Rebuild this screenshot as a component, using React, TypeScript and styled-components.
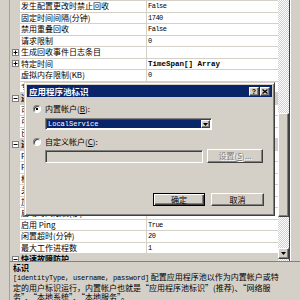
import React from 'react';
import styled, { createGlobalStyle, css } from 'styled-components';

const CJK = '"Noto Sans CJK SC", "Noto Sans", sans-serif';
const MONO = '"Liberation Mono", "Noto Sans CJK SC", monospace';
const FACE = '#d4d0c8';
const LINE = '#d4d0c8';

interface RowData {
  name: string;
  value?: string;
  category?: boolean;
  expand?: boolean;
  bold?: boolean;
}

const rows: RowData[] = [
  { name: '发生配置更改时禁止回收', value: 'False' },
  { name: '固定时间间隔(分钟)', value: '1740' },
  { name: '禁用重叠回收', value: 'False' },
  { name: '请求限制', value: '0' },
  { name: '生成回收事件日志条目', value: '', expand: true },
  { name: '特定时间', value: 'TimeSpan[] Array', expand: true, bold: true },
  { name: '虚拟内存限制(KB)', value: '0' },
  { name: '专用内存限制(KB)', value: '0' },
  { name: '进程孤立', category: true },
  { name: '可执行文件', value: '' },
  { name: '可执行文件参数', value: '' },
  { name: '已启用', value: 'False' },
  { name: '进程模型', category: true },
  { name: 'Ping 间隔(秒)', value: '30' },
  { name: 'Ping 最大响应时间(秒)', value: '90' },
  { name: '标识', value: 'LocalService' },
  { name: '关闭时间限制(秒)', value: '90' },
  { name: '加载用户配置文件', value: 'False' },
  { name: '启动时间限制(秒)', value: '90' },
  { name: '启用 Ping', value: 'True' },
  { name: '闲置超时(分钟)', value: '20' },
  { name: '最大工作进程数', value: '1' },
  { name: '快速故障防护', category: true },
  { name: '已启用', value: 'False' },
];

const Expander = ({ open }: { open?: boolean }) => (
  <svg width="7" height="7" viewBox="0 0 7 7">
    <rect x="0.5" y="0.5" width="6" height="6" fill="#fff" stroke="#808080" />
    <path d="M1.5 3.5h4" stroke="#000" />
    {!open && <path d="M3.5 1.5v4" stroke="#000" />}
  </svg>
);

const App = () => (
  <>
    <GlobalStyle />
    <Screen>
      <Top>
        <Side />
        <Grid>
          {rows.map((row, i) => (
            <Row key={i}>
              <Margin>
                {row.category && <Expander open />}
                {row.expand && <Expander />}
              </Margin>
              <Name $category={row.category}>{row.name}</Name>
              <Divider $category={row.category} />
              <Value $category={row.category} $bold={row.bold}>
                {row.value}
              </Value>
            </Row>
          ))}
        </Grid>
        <ScrollBar>
          <Thumb />
          <Spacer />
          <ArrowButton>
            <svg width="5" height="3" viewBox="0 0 5 3">
              <path d="M0 0h5L2.5 3z" fill="#000" />
            </svg>
          </ArrowButton>
        </ScrollBar>
        <RightEdge />
      </Top>
      <Desc>
        <DescTitle>标识</DescTitle>
        <DescLine>
          <Mono>[identityType, username, password]</Mono> 配置应用程序池以作为内置帐户或特
        </DescLine>
        <DescLine>定的用户标识运行，内置帐户也就是“应用程序池标识”(推荐)、“网络服</DescLine>
        <DescLine>务”、“本地系统”、“本地服务”。</DescLine>
      </Desc>

      <Dialog>
        <TitleBar>
          <TitleText>应用程序池标识</TitleText>
          <TitleButton>?</TitleButton>
          <TitleButton>
            <svg width="6" height="5" viewBox="0 0 6 5">
              <path d="M0.5 0.5l5 4M5.5 0.5l-5 4" stroke="#000" strokeWidth="1.3" />
            </svg>
          </TitleButton>
        </TitleBar>
        <Body>
          <RadioRow>
            <Radio $checked />
            <span>
              内置帐户(<u>B</u>):
            </span>
          </RadioRow>
          <Select>
            <Selected>LocalService</Selected>
            <DropButton>
              <svg width="5" height="3" viewBox="0 0 5 3">
                <path d="M0 0h5L2.5 3z" fill="#000" />
              </svg>
            </DropButton>
          </Select>
          <RadioRow $gap>
            <Radio />
            <span>
              自定义帐户(<u>C</u>):
            </span>
          </RadioRow>
          <FieldRow>
            <TextBox />
            <PushButton $disabled $width={56}>
              设置(<u>S</u>)...
            </PushButton>
          </FieldRow>
          <Footer>
            <PushButton $default $width={52}>
              确定
            </PushButton>
            <PushButton $width={53}>取消</PushButton>
          </Footer>
        </Body>
      </Dialog>
    </Screen>
  </>
);

const GlobalStyle = createGlobalStyle`
  html, body {
    margin: 0;
    padding: 0;
    background: ${FACE};
  }
  body {
    font-family: ${CJK};
    font-size: 8px;
    color: #000;
    overflow: hidden;
  }
`;

const raised = css`
  box-sizing: border-box;
  background: ${FACE};
  border: 1px solid;
  border-color: #fff #404040 #404040 #fff;
  box-shadow: inset -1px -1px #808080;
`;

const sunken = css`
  box-sizing: border-box;
  border: 1px solid;
  border-color: #808080 #fff #fff #808080;
  box-shadow: inset 1px 1px #404040;
`;

const Screen = styled.div`
  position: relative;
  width: 300px;
  height: 300px;
  display: flex;
  flex-direction: column;
  overflow: hidden;
`;

const Top = styled.div`
  display: flex;
  height: 261px;
  flex: none;
`;

const Side = styled.div`
  width: 9px;
  flex: none;
  border-right: 1px solid #a0a0a0;
`;

const Grid = styled.div`
  width: 268px;
  flex: none;
  display: flex;
  flex-direction: column;
  gap: 1px;
  padding-top: 1px;
  background: ${LINE};
  overflow: hidden;
`;

const Row = styled.div`
  display: grid;
  grid-template-columns: 10px 126px 1px 131px;
  height: 10.5px;
  flex: none;
`;

const Margin = styled.div`
  display: flex;
  align-items: center;
  padding-left: 2px;
  background: ${LINE};
`;

const Name = styled.div<{ $category?: boolean }>`
  background: ${(p) => (p.$category ? LINE : '#fff')};
  font-weight: ${(p) => (p.$category ? 700 : 400)};
  padding-left: 1px;
  line-height: 10.5px;
  white-space: nowrap;
  overflow: hidden;
`;

const Divider = styled.div<{ $category?: boolean }>`
  background: ${LINE};
`;

const Value = styled.div<{ $category?: boolean; $bold?: boolean }>`
  background: ${(p) => (p.$category ? LINE : '#fff')};
  font-family: ${MONO};
  font-size: ${(p) => (p.$bold ? '7.5px' : '7px')};
  font-weight: ${(p) => (p.$bold ? 700 : 400)};
  letter-spacing: ${(p) => (p.$bold ? '0' : '-0.5px')};
  padding-left: 1px;
  line-height: 10.5px;
  white-space: nowrap;
  overflow: hidden;
`;

const ScrollBar = styled.div`
  width: 11px;
  flex: none;
  display: flex;
  flex-direction: column;
  padding-bottom: 2px;
  box-sizing: border-box;
  background-color: #f4f3ee;
  background-image: repeating-conic-gradient(${FACE} 0 25%, #fff 0 50%);
  background-size: 2px 2px;
`;

const Thumb = styled.div`
  ${raised};
  margin-top: 113px;
  height: 104px;
  flex: none;
`;

const Spacer = styled.div`
  flex: 1;
`;

const ArrowButton = styled.div`
  ${raised};
  height: 11px;
  flex: none;
  display: flex;
  align-items: center;
  justify-content: center;
`;

const RightEdge = styled.div`
  flex: 1;
  border-left: 1px solid #404040;
  box-shadow: inset 1px 0 #fff;
`;

const Desc = styled.div`
  flex: 1;
  margin-left: 9px;
  border-left: 1px solid #a0a0a0;
  border-top: 1px solid #808080;
  padding: 1px 0 0 3px;
  line-height: 9px;
  font-size: 8px;
`;

const DescTitle = styled.div`
  font-weight: 700;
`;

const DescLine = styled.div`
  white-space: nowrap;
`;

const Mono = styled.span`
  font-family: ${MONO};
  font-size: 7px;
  letter-spacing: -0.2px;
`;

const Dialog = styled.div`
  position: absolute;
  left: 24px;
  top: 82px;
  width: 251px;
  height: 134px;
  box-sizing: border-box;
  background: ${FACE};
  border: 1px solid;
  border-color: ${FACE} #404040 #404040 ${FACE};
  box-shadow: inset 1px 1px #fff, inset -1px -1px #808080;
  padding: 2px;
  display: flex;
  flex-direction: column;
`;

const TitleBar = styled.div`
  height: 12px;
  flex: none;
  display: flex;
  align-items: center;
  gap: 1px;
  padding: 0 2px 0 2px;
  background: #0a246a;
  color: #fff;
`;

const TitleText = styled.div`
  flex: 1;
  font-size: 8.5px;
  font-weight: 700;
  line-height: 12px;
`;

const TitleButton = styled.div`
  ${raised};
  width: 10px;
  height: 9px;
  display: flex;
  align-items: center;
  justify-content: center;
  color: #000;
  font-family: "Liberation Sans", sans-serif;
  font-weight: 700;
  font-size: 7px;
  line-height: 7px;
`;

const Body = styled.div`
  flex: 1;
  display: flex;
  flex-direction: column;
  padding: 8px 8px 7px 6px;
`;

const RadioRow = styled.div<{ $gap?: boolean }>`
  display: flex;
  align-items: center;
  gap: 4px;
  height: 8px;
  line-height: 8px;
  margin-top: ${(p) => (p.$gap ? '8px' : '0')};
`;

const Radio = styled.span<{ $checked?: boolean }>`
  ${sunken};
  width: 8px;
  height: 8px;
  border-radius: 50%;
  background: #fff;
  display: flex;
  align-items: center;
  justify-content: center;

  &::after {
    content: '';
    width: 2px;
    height: 2px;
    background: ${(p) => (p.$checked ? '#000' : 'transparent')};
  }
`;

const Select = styled.div`
  ${sunken};
  margin: 5px 0 0 12px;
  width: 167px;
  height: 12px;
  padding: 1px;
  background: #fff;
  display: flex;
`;

const Selected = styled.div`
  flex: 1;
  background: #0a246a;
  color: #fff;
  font-family: ${MONO};
  font-size: 7px;
  line-height: 8px;
  padding-left: 1px;
`;

const DropButton = styled.div`
  ${raised};
  width: 9px;
  display: flex;
  align-items: center;
  justify-content: center;
`;

const FieldRow = styled.div`
  display: flex;
  align-items: flex-start;
  gap: 4px;
  margin: 4px 0 0 12px;
`;

const TextBox = styled.div`
  ${sunken};
  width: 158px;
  height: 13px;
  background: ${FACE};
`;

const PushButton = styled.div<{ $width: number; $disabled?: boolean; $default?: boolean }>`
  ${raised};
  width: ${(p) => p.$width}px;
  height: ${(p) => (p.$disabled ? 14 : 13)}px;
  margin-top: ${(p) => (p.$disabled ? '-1px' : '0')};
  display: flex;
  align-items: center;
  justify-content: center;
  line-height: 8px;
  color: ${(p) => (p.$disabled ? '#808080' : '#000')};
  text-shadow: ${(p) => (p.$disabled ? '1px 1px #fff' : 'none')};
  ${(p) =>
    p.$default &&
    css`
      border: 1px solid #000;
      box-shadow: inset 1px 1px #fff, inset -1px -1px #404040, inset -2px -2px #808080;
    `}
`;

const Footer = styled.div`
  margin-top: auto;
  display: flex;
  justify-content: flex-end;
  gap: 6px;
`;

export default App;
